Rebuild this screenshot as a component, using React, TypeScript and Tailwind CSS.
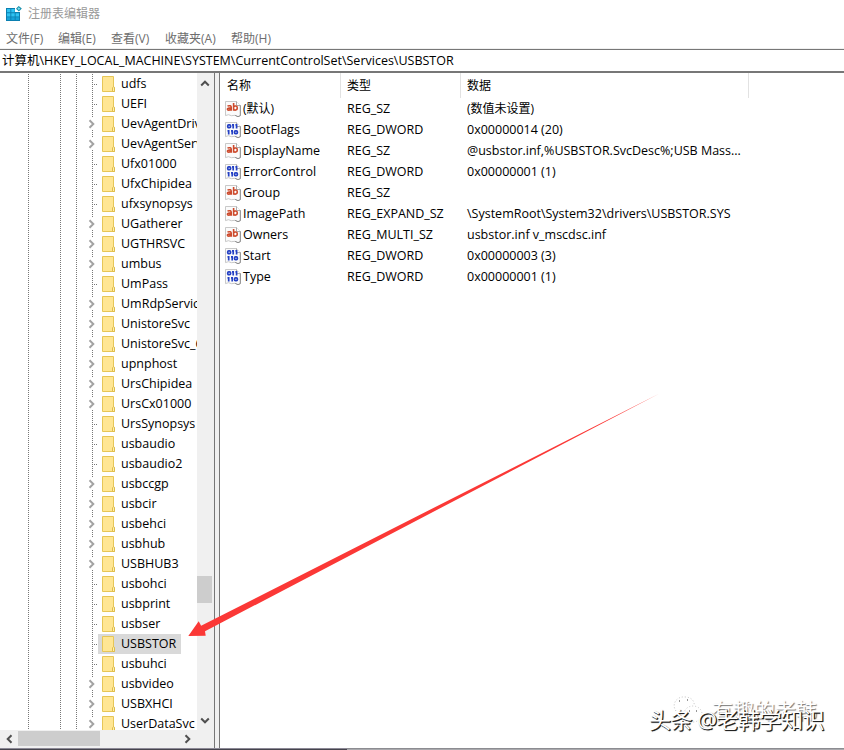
import clsx from 'clsx';

type TreeItem = { name: string; expandable?: boolean; selected?: boolean };

const treeItems: TreeItem[] = [
  { name: 'udfs' },
  { name: 'UEFI' },
  { name: 'UevAgentDriver', expandable: true },
  { name: 'UevAgentService', expandable: true },
  { name: 'Ufx01000' },
  { name: 'UfxChipidea' },
  { name: 'ufxsynopsys' },
  { name: 'UGatherer', expandable: true },
  { name: 'UGTHRSVC', expandable: true },
  { name: 'umbus', expandable: true },
  { name: 'UmPass' },
  { name: 'UmRdpService', expandable: true },
  { name: 'UnistoreSvc', expandable: true },
  { name: 'UnistoreSvc_6', expandable: true },
  { name: 'upnphost', expandable: true },
  { name: 'UrsChipidea', expandable: true },
  { name: 'UrsCx01000', expandable: true },
  { name: 'UrsSynopsys' },
  { name: 'usbaudio' },
  { name: 'usbaudio2' },
  { name: 'usbccgp', expandable: true },
  { name: 'usbcir', expandable: true },
  { name: 'usbehci', expandable: true },
  { name: 'usbhub', expandable: true },
  { name: 'USBHUB3', expandable: true },
  { name: 'usbohci' },
  { name: 'usbprint' },
  { name: 'usbser' },
  { name: 'USBSTOR', selected: true },
  { name: 'usbuhci' },
  { name: 'usbvideo', expandable: true },
  { name: 'USBXHCI', expandable: true },
  { name: 'UserDataSvc', expandable: true },
];

const values = [
  { name: '(默认)', type: 'REG_SZ', data: '(数值未设置)' },
  { name: 'BootFlags', type: 'REG_DWORD', data: '0x00000014 (20)' },
  { name: 'DisplayName', type: 'REG_SZ', data: '@usbstor.inf,%USBSTOR.SvcDesc%;USB Mass...' },
  { name: 'ErrorControl', type: 'REG_DWORD', data: '0x00000001 (1)' },
  { name: 'Group', type: 'REG_SZ', data: '' },
  { name: 'ImagePath', type: 'REG_EXPAND_SZ', data: '\\SystemRoot\\System32\\drivers\\USBSTOR.SYS' },
  { name: 'Owners', type: 'REG_MULTI_SZ', data: 'usbstor.inf v_mscdsc.inf' },
  { name: 'Start', type: 'REG_DWORD', data: '0x00000003 (3)' },
  { name: 'Type', type: 'REG_DWORD', data: '0x00000001 (1)' },
];

const menus = [
  { label: '文件(F)', className: 'w-[52px]' },
  { label: '编辑(E)', className: 'w-[53px]' },
  { label: '查看(V)', className: 'w-[54px]' },
  { label: '收藏夹(A)', className: 'w-[66px]' },
  { label: '帮助(H)', className: 'w-[52px]' },
];

function AppIcon() {
  return (
    <svg width="16" height="16" viewBox="0 0 16 16">
      <path d="M0 2h9v4h5v9H0z" fill="#0b7fb0" />
      <path d="M1 3h3.4v3.3H1zM5.3 3h3.4v3.3H5.3zM1 7.2h3.4v3.3H1zM5.3 7.2h3.4v3.3H5.3zM9.6 7.2H13v3.3H9.6z" fill="#2fc3f2" />
      <path d="M1 11.2h3.4V14H1zM5.3 11.2h3.4V14H5.3zM9.6 11.2H13V14H9.6z" fill="#17a3d8" />
      <path d="M12.7 0l3.1 2.6-2.9 2.9L10 2.8z" fill="#128aa8" />
      <path d="M12.8 1.3l1.6 1.4-1.6 1.4-1.5-1.4z" fill="#7fe3ee" />
    </svg>
  );
}

function FolderIcon() {
  return (
    <svg width="13" height="16" viewBox="0 0 13 16">
      <path d="M.5.5h11v10l1 .8v4.2H.5z" fill="#ffe694" stroke="#e6c657" />
      <path d="M10.5 15.5v-3.7l1-1.3 1 1.3v3.7z" fill="#ffefb0" stroke="#dfbd4a" />
    </svg>
  );
}

function Page() {
  return (
    <>
      <path d="M.5.5h11l4 4v10l-2.5 1.1-3-1.3-3.6.4-2.9-1-3 .9z" fill="#fbfbfb" stroke="#c3c3c3" strokeWidth=".9" />
      <path d="M11.5.5v4h4" fill="#fff" stroke="#a4a4a4" strokeWidth=".9" />
      <path d="M15.3 4.5v10.2l-2.3 1-2.8-1.3" fill="none" stroke="#8e8e8e" />
    </>
  );
}

function StringIcon() {
  return (
    <svg width="16" height="16" viewBox="0 0 16 16">
      <Page />
      <g fill="none" stroke="#cd4a2c" strokeWidth="1.6">
        <path d="M2.5 5.1c2.6-.8 3.7-.2 3.7 1.1v3.5M6.2 6.9c-2.6-.1-3.9.3-3.8 1.3.1 1.3 2.7 1.2 3.8-.2" />
        <path d="M8.6 2.1v7.6M8.6 5.9c.9-1.3 3.7-1.3 3.7 1.1 0 2.5-2.8 2.5-3.7 1.2" />
      </g>
    </svg>
  );
}

function BinaryIcon() {
  return (
    <svg width="16" height="16" viewBox="0 0 16 16">
      <Page />
      <g fill="none" stroke="#2440c4" strokeWidth="1.7">
        <rect x="2.7" y="2.9" width="2.9" height="2.7" rx="1" />
        <path d="M7 2.9h1.2v3.6M10.4 2.9h1.2v3.6M2.5 8.9h1.2v3.6M6 8.9h1.2v3.6" />
        <rect x="9.5" y="8.9" width="2.9" height="2.7" rx="1" />
      </g>
    </svg>
  );
}

function Chevron({ className }: { className?: string }) {
  return (
    <svg width="8" height="10" viewBox="0 0 8 10" className={className} fill="none" stroke="currentColor" strokeWidth="2">
      <path d="M1.5 1.2L5.3 5 1.5 8.8" />
    </svg>
  );
}

const dots = 'bg-[repeating-linear-gradient(to_bottom,#777_0_1px,transparent_1px_2px)]';

function TreeRow({ item }: { item: TreeItem }) {
  return (
    <li className="flex h-5 shrink-0 items-center">
      <span className={clsx('ml-7 h-full w-px shrink-0', dots)} />
      <span className={clsx('ml-[31px] h-full w-px shrink-0', dots)} />
      <span className={clsx('ml-[15px] h-full w-px shrink-0', dots)} />
      {item.expandable ? (
        <span className="ml-[11px] flex h-full w-[10px] shrink-0 flex-col">
          <span className={clsx('ml-1 h-1 w-px', dots)} />
          <Chevron className="my-px text-[#a3a3a3]" />
          <span className={clsx('ml-1 h-1 w-px', dots)} />
        </span>
      ) : (
        <span className="ml-[15px] flex h-full w-[6px] shrink-0 items-center">
          <span className={clsx('h-full w-px', dots)} />
          <span className="h-px w-[5px] bg-[repeating-linear-gradient(to_right,transparent_0_1px,#777_1px_2px)]" />
        </span>
      )}
      <span
        className={clsx(
          'flex h-full shrink-0 items-center pr-[5px] pl-1 whitespace-nowrap',
          item.selected && 'bg-[#d9d9d9]',
        )}
      >
        <FolderIcon />
        <span className="ml-[6px]">{item.name}</span>
      </span>
    </li>
  );
}

function TreePane() {
  return (
    <aside className="flex w-[215px] shrink-0 flex-col border-r border-[#777] bg-[#f0f0f0]">
      <div className="flex h-[657px]">
        <ul className="flex w-[197px] flex-col overflow-hidden bg-white pt-px pr-px">
          {treeItems.map((item) => (
            <TreeRow key={item.name} item={item} />
          ))}
        </ul>
        <div className="flex w-[15px] flex-col items-center text-[#505050]">
          <Chevron className="mt-[5px] -rotate-90" />
          <div className="mt-[488px] h-[27px] w-full bg-[#cdcdcd]" />
          <Chevron className="mt-auto mb-1 rotate-90" />
        </div>
      </div>
      <div className="flex h-4 items-center pt-px text-[#505050]">
        <Chevron className="ml-[5px] rotate-180" />
        <div className="ml-[5px] h-[15px] w-[82px] bg-[#cdcdcd]" />
        <Chevron className="ml-[84px]" />
      </div>
    </aside>
  );
}

function ValueList() {
  return (
    <main className="ml-1 min-w-0 flex-1 border-l border-[#777] bg-white">
      <div className="flex h-[25px] items-center text-xs">
        <div className="flex h-full w-[121px] items-center border-r border-[#e2e2e2] pt-px pl-[7px]">名称</div>
        <div className="flex h-full w-[120px] items-center border-r border-[#e2e2e2] pt-px pl-[6px]">类型</div>
        <div className="flex h-full w-[288px] items-center border-r border-[#e2e2e2] pt-px pl-[6px]">数据</div>
      </div>
      {values.map((value) => (
        <div key={value.name} className="flex h-[21px] items-center whitespace-nowrap">
          <div className="flex w-[127px] items-center pl-[5px]">
            {value.type === 'REG_DWORD' ? <BinaryIcon /> : <StringIcon />}
            <span className={clsx('ml-[2px]', value.name === '(默认)' && 'text-xs')}>{value.name}</span>
          </div>
          <div className="w-[120px]">{value.type}</div>
          <div className={value.name === '(默认)' ? 'text-xs' : undefined}>{value.data}</div>
        </div>
      ))}
    </main>
  );
}

function Arrow() {
  return (
    <svg className="pointer-events-none absolute top-[390px] left-[180px]" width="490" height="255" viewBox="180 390 490 255">
      <path d="M188.3 636l10.4-14.7 2.4 4.4L659.5 393.4 205 631.3l.7 4.4z" fill="#fb3836" />
    </svg>
  );
}

function Watermark() {
  return (
    <>
      <div className="absolute top-[694px] left-[672px] flex items-center whitespace-nowrap">
        <svg width="32" height="32" viewBox="0 0 32 32" fill="none" stroke="#b8b8b8" strokeWidth=".8" strokeDasharray="1 2">
          <path d="M4 17C-1 10 5 2 13 3c7 0 10 5 9 9" />
          <ellipse cx="21" cy="20" rx="9" ry="8" />
          <path d="M7 7h1M15 6h1M17 17h1M24 17h1" stroke="#777" strokeWidth="1.4" />
        </svg>
        <span className="ml-2 text-[21px] leading-7 text-white [text-shadow:1px_1px_1px_#777]">有趣的老韩</span>
      </div>
      <div className="absolute top-[704px] left-[649px] text-[22px] leading-[30px] tracking-[-0.5px] whitespace-nowrap text-white [text-shadow:1px_1px_0_#222,1px_1px_1px_#000]">
        头条 @老韩学知识
      </div>
    </>
  );
}

export default function App() {
  return (
    <div className="relative flex h-[750px] w-[844px] flex-col overflow-hidden bg-white font-['Open_Sans','Noto_Sans_CJK_SC',sans-serif] text-[12.5px] leading-5 text-black">
      <header className="flex h-7 items-center pl-[6px] text-[#999]">
        <AppIcon />
        <span className="ml-[6px] text-xs">注册表编辑器</span>
      </header>
      <nav className="flex h-[21px] items-center border-b border-[#f0f0f0] pt-[2px] pl-[6px] text-xs text-[#6d6d6d]">
        {menus.map((menu) => (
          <span key={menu.label} className={clsx('whitespace-nowrap', menu.className)}>
            {menu.label}
          </span>
        ))}
      </nav>
      <div className="flex h-6 items-center border-t border-b-2 border-[#777] pl-[2px] whitespace-nowrap">
        计算机\HKEY_LOCAL_MACHINE\SYSTEM\CurrentControlSet\Services\USBSTOR
      </div>
      <div className="flex h-[675px] bg-[#f0f0f0]">
        <TreePane />
        <ValueList />
      </div>
      <footer className="flex h-[2px]">
        <div className="w-[347px] border-t border-[#8c8996] bg-[#46444d]" />
        <div className="flex-1 border-t border-[#8c8c91] bg-[#a9a9ad]" />
      </footer>
      <Arrow />
      <Watermark />
    </div>
  );
}
